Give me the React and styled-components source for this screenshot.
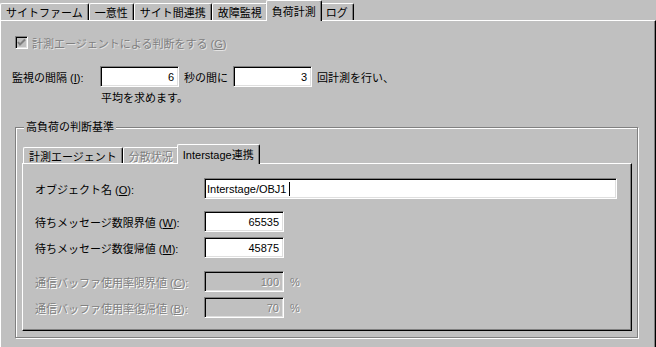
import React from 'react';
import styled, {createGlobalStyle, css} from "styled-components";

const GlobalStyle = createGlobalStyle`
  html, body {
    margin: 0;
    padding: 0;
    background: #c0c0c0;
  }
  body {
    font-family: "Liberation Sans", "Noto Sans CJK JP", sans-serif;
    font-size: 11px;
    color: #000;
  }
`;

const Page = styled.div`
  width: 656px;
  height: 347px;
  overflow: hidden;
  display: flex;
  flex-direction: column;
  background: #c0c0c0;
`;

const TabStrip = styled.div`
  display: flex;
  align-items: flex-end;
  flex-shrink: 0;
  height: ${p => p.$height}px;
  margin-left: ${p => p.$indent || 0}px;
  margin-top: ${p => p.$top || 0}px;
  position: relative;
  z-index: 1;
`;

const Tab = styled.div`
  box-sizing: border-box;
  height: ${p => p.$height}px;
  padding: 0 5px;
  display: flex;
  align-items: center;
  white-space: nowrap;
  background: #c0c0c0;
  border-top: 1px solid #fff;
  border-left: 1px solid #fff;
  border-right: 1px solid #000;
  border-radius: 2px 2px 0 0;
  box-shadow: inset -1px 0 0 #808080;
  ${p => p.$active && css`
    height: ${p.$height + 4}px;
    margin: 0 -2px -1px;
    padding: 0 5px 1px;
    position: relative;
    z-index: 2;
  `}
  ${p => p.$disabled && css`
    color: #808080;
    text-shadow: 1px 1px 0 #fff;
  `}
`;

const Panel = styled.div`
  flex: 1;
  min-height: 0;
  display: flex;
  flex-direction: column;
  box-sizing: border-box;
  border-top: 1px solid #fff;
  border-left: 1px solid #fff;
  border-right: 1px solid #000;
  box-shadow: inset -1px 0 0 #808080;
  padding: 14px 0 0 11px;
`;

const CheckRow = styled.label`
  display: flex;
  align-items: center;
  gap: 4px;
  height: 15px;
  margin-left: 3px;
  color: #808080;
  text-shadow: 1px 1px 0 #e4e4e4;
`;

const CheckBox = styled.span`
  box-sizing: border-box;
  width: 13px;
  height: 13px;
  border-top: 1px solid #808080;
  border-left: 1px solid #808080;
  border-bottom: 1px solid #fff;
  border-right: 1px solid #fff;
  box-shadow: inset 1px 1px 0 #000, inset -1px -1px 0 #dfdfdf;
  background: #c0c0c0;
  display: flex;
  align-items: center;
  justify-content: center;
`;

const IntervalRow = styled.div`
  display: flex;
  align-items: center;
  gap: 5px;
  margin-top: 16px;
`;

const IntervalLabel = styled.span`
  width: 83px;
`;

const Note = styled.div`
  margin: 4px 0 0 89px;
  line-height: 14px;
`;

const Field = styled.div`
  box-sizing: border-box;
  width: ${p => p.$width}px;
  height: 21px;
  padding: 0 4px;
  display: flex;
  align-items: center;
  justify-content: ${p => p.$left ? 'flex-start' : 'flex-end'};
  background: ${p => p.$disabled ? '#c0c0c0' : '#fff'};
  color: ${p => p.$disabled ? '#808080' : '#000'};
  text-shadow: ${p => p.$disabled ? '1px 1px 0 #fff' : 'none'};
  border-top: 1px solid #808080;
  border-left: 1px solid #808080;
  border-bottom: 1px solid #fff;
  border-right: 1px solid #fff;
  box-shadow: inset 1px 1px 0 #000, inset -1px -1px 0 #dfdfdf;
  white-space: nowrap;
  ${p => p.$left && css`padding-left: 2px;`}
`;

const Caret = styled.span`
  display: inline-block;
  width: 1px;
  height: 14px;
  margin-left: 2px;
  background: #000;
`;

const Group = styled.fieldset`
  flex: 1;
  display: flex;
  flex-direction: column;
  margin: 15px 17px 9px 3px;
  padding: 0 5px 6px 6px;
  min-width: 0;
  border: 1px solid #808080;
  box-shadow: inset 1px 1px 0 #fff, 1px 1px 0 #fff;
`;

const Legend = styled.legend`
  margin-left: 2px;
  padding: 0 2px;
  line-height: 14px;
  background: #c0c0c0;
`;

const InnerPanel = styled.div`
  flex: 1;
  box-sizing: border-box;
  border-top: 1px solid #fff;
  border-left: 1px solid #fff;
  border-right: 1px solid #000;
  border-bottom: 1px solid #000;
  box-shadow: inset -1px -1px 0 #808080;
  padding: 14px 0 0 12px;
`;

const FormRow = styled.div`
  display: flex;
  align-items: center;
  margin-top: ${p => p.$top || 0}px;
  color: ${p => p.$disabled ? '#808080' : '#000'};
  text-shadow: ${p => p.$disabled ? '1px 1px 0 #fff' : 'none'};
`;

const FormLabel = styled.span`
  width: 169px;
  white-space: nowrap;
`;

const Unit = styled.span`
  margin-left: 6px;
`;

const outerTabs = ["サイトファーム", "一意性", "サイト間連携", "故障監視", "負荷計測", "ログ"];

const rows = [
  {label: "待ちメッセージ数限界値", key: "W", value: "65535", top: 12},
  {label: "待ちメッセージ数復帰値", key: "M", value: "45875", top: 5},
  {label: "通信バッファ使用率限界値", key: "C", value: "100", top: 13, disabled: true},
  {label: "通信バッファ使用率復帰値", key: "B", value: "70", top: 5, disabled: true},
];

const App = () => {
  return (
    <>
      <GlobalStyle/>
      <Page>
        <TabStrip $height={20}>
          {outerTabs.map(t => (
            <Tab key={t} $height={17} $active={t === "負荷計測"}>{t}</Tab>
          ))}
        </TabStrip>

        <Panel>
          <CheckRow>
            <CheckBox>
              <svg width="9" height="9" viewBox="0 0 9 9">
                <path d="M1 4 L3 6.5 L8 1.5" stroke="#808080" strokeWidth="2" fill="none"/>
              </svg>
            </CheckBox>
            <span>計測エージェントによる判断をする (<u>G</u>)</span>
          </CheckRow>

          <IntervalRow>
            <IntervalLabel>監視の間隔 (<u>I</u>):</IntervalLabel>
            <Field $width={79}>6</Field>
            <span>秒の間に</span>
            <Field $width={79}>3</Field>
            <span>回計測を行い、</span>
          </IntervalRow>
          <Note>平均を求めます。</Note>

          <Group>
            <Legend>高負荷の判断基準</Legend>
            <TabStrip $height={20} $indent={1} $top={9}>
              <Tab $height={16}>計測エージェント</Tab>
              <Tab $height={16} $disabled>分散状況</Tab>
              <Tab $height={16} $active>Interstage連携</Tab>
            </TabStrip>
            <InnerPanel>
              <FormRow>
                <FormLabel>オブジェクト名 (<u>O</u>):</FormLabel>
                <Field $width={413} $left>Interstage/OBJ1<Caret/></Field>
              </FormRow>
              {rows.map(r => (
                <FormRow key={r.key} $top={r.top} $disabled={r.disabled}>
                  <FormLabel>{r.label} (<u>{r.key}</u>):</FormLabel>
                  <Field $width={80} $disabled={r.disabled}>{r.value}</Field>
                  {r.disabled && <Unit>%</Unit>}
                </FormRow>
              ))}
            </InnerPanel>
          </Group>
        </Panel>
      </Page>
    </>
  );
};

export default App;
